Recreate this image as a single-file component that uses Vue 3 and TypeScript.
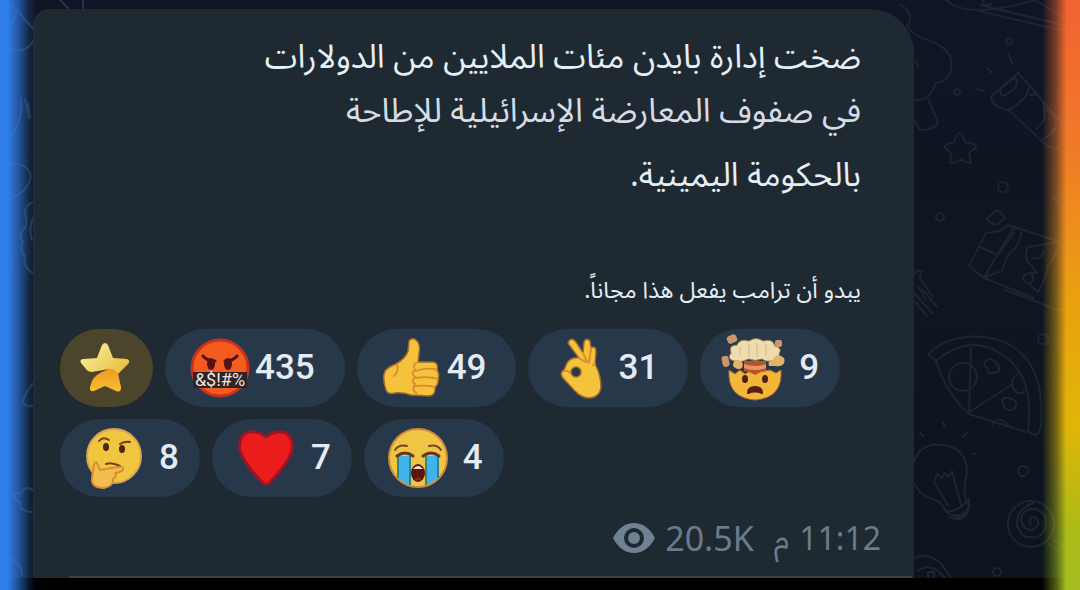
<script setup lang="ts">
type Kind = 'star' | 'curse' | 'thumb' | 'ok' | 'blown' | 'think' | 'heart' | 'cry'

interface Reaction {
  kind: Kind
  label: string
  count?: number
}

const lines: string[] = [
  'ضخت إدارة بايدن مئات الملايين من الدولارات',
  'في صفوف المعارضة الإسرائيلية للإطاحة',
  'بالحكومة اليمينية.',
]

const reactions: Reaction[] = [
  { kind: 'star', label: 'Star' },
  { kind: 'curse', label: 'Cursing face', count: 435 },
  { kind: 'thumb', label: 'Thumbs up', count: 49 },
  { kind: 'ok', label: 'OK hand', count: 31 },
  { kind: 'blown', label: 'Exploding head', count: 9 },
  { kind: 'think', label: 'Thinking face', count: 8 },
  { kind: 'heart', label: 'Heart', count: 7 },
  { kind: 'cry', label: 'Crying face', count: 4 },
]
</script>

<template>
  <main class="page">
    <div class="chat">
      <svg class="doodles doodles-left" width="120" height="578" viewBox="0 0 120 578" aria-hidden="true">
        <path d="M12 5 34 30M34 40Q25 55 10 49T-6 30M0 34Q12 30 18 8M0 145Q24 128 21 99M25 100l4 18M28 103l2 15M0 166q16-5 24 0 12 8 2 22-8 9-26 14M34 202q-12 4-8 14 1 8-1 12-8 7-2 14-4 8 2 14-4 10 9 18M34 216q-6 14-2 24M0 250q16 4 10 22-4 12-10 16M34 382q-14 18-10 22 4 4 10 1M34 492q-4-6-10-3-2 6-10 4 0 8 6 9-2 10 14 10M0 555q22 4 22 20M60 0l8 8M83 0v9" />
      </svg>
      <svg class="doodles doodles-right" width="180" height="578" viewBox="0 0 180 578" aria-hidden="true">
        <path d="M0 5q16 8 7 22M8 27q4 6 14 11 34 10 29 32-3 12-15 13-8 22-28 16M28 99l9 20q2 6-3 8-10 5-15 2l-5-10M16 60l2 7M46 0q20 20 89 0M75 10l105 25M80 5l100 24M135 0l40 24M83 0q0 8 8 4" />
        <path d="M118 73 91 97q0 8 15 13 10-2 20-14 4-10 3-11zM102 96q-6-9 14-18 4 12-14 18zM129 85l36 42q4 16-9 21-5 1-10-3L109 110M130 95q12-3 14 13M144 108l22 18M144 109q4 10-8 20M156 123q0 10-13 16M108 54l5 10M87 68l5 5M77 89l7 2" />
        <path d="M60 133q2 0 5 9l9 2q4 1 0 5l-5 4 2 10q-2 1-10-4-8 5-11 4l1-10-6-5q-1-4 9-6 4-10 6-9z" />
        <g><circle cx="109" cy="41" r="3" /><circle cx="57" cy="92" r="3" /><circle cx="103" cy="187" r="5" /><circle cx="40" cy="217" r="4" /><circle cx="143" cy="339" r="5" /><circle cx="123" cy="471" r="5" /><circle cx="97" cy="572" r="4" /></g>
        <path d="M87 219q8-10 12-8l6 7q-8 8-12 6zM86 233 69 266l15 12 50 20M86 233l14-2 8-6 10 3 42 14M80 247l18 8 16-22M84 278q14-26 30-50l8 1q-2 18-14 26l-6 16q-8 2-18 7M160 242l-32 5q-6 12 5 20l4 6-8 0q-12 4 0 11l9 8q9-15 10-27 8-8 12-23zM132 258q12 2 11-8M129 284q8-6 1-11M152 198q12 0 14-14M152 198q9 6 12 14" />
        <path d="M14 275q2-6 8-4-4 8 0 10l11 16M18 286l8 14M15 302l12 14M15 294l18 20M23 290l14 17M105 290q40 14 50 20 12 0 18-3" />
        <path d="M30 352q-3 2 0 4l6 5q34-28 65-7 34 20 27 76 1 4 6 4 4 3 7-8 6-80-56-89-34-3-55 15zM36 361q10 32 33 53l57 18M71 348l-2 65M69 412l44-28M86 361q4-4 9 1 6 5 3 10-5 0-7 2-5-2-3-5-6-4-2-8zM104 404q-4-3 0-6 4-1 7 1 7 1 5 7-3 5-7 4-6-1-5-6zM119 373q-10 7-6 14 4 9 12 5M92 425q6-12 18 2" /><circle cx="63" cy="377" r="14" />
        <path d="M14 462q8-24 38-15 20 10 13 36-2 15 4 23l-3 6q-11 7-20 0-3-10-14-13-14-5-17-15M34 482l3-8 5 4 3-5 4 4 3-6 9 34M34 482l14 23M47 511q10 2 22-12v10q-6 12-20 8M53 518q8 4 14-4M43 423l2 4M20 433l3 3M63 437l4-4M74 454h1" />
        <circle cx="131" cy="524" r="23" /><path d="M131 524q-4-4 1-7 7 0 6 8-5 8-13 3-7-8-1-16 12-8 21 4 4 15-8 21-16 3-20-12-1-16 16-22M153 539l27 20M149 544l31 22M14 558q16-6 28 7l9 13M17 571q10-7 20-1l8 8M28 578v-6h6v6" />
      </svg>

      <article class="bubble" dir="rtl" lang="ar">
        <div class="body">
          <p v-for="line in lines" :key="line" class="line">{{ line }}</p>
          <p class="note">يبدو أن ترامب يفعل هذا مجاناً.</p>
        </div>

        <div class="reactions" dir="ltr">
          <button
            v-for="r in reactions"
            :key="r.kind"
            type="button"
            class="pill"
            :class="{ gold: r.kind === 'star', compact: r.count !== undefined && r.count < 10 }"
            :aria-label="r.label"
          >
            <svg v-if="r.kind === 'star'" class="star" viewBox="0 0 50 50">
              <defs>
                <linearGradient id="starTop" x1="0" y1="0" x2="1" y2="1"><stop offset="0" stop-color="#fff3a5" /><stop offset=".5" stop-color="#efd164" /><stop offset="1" stop-color="#eea522" /></linearGradient>
                <linearGradient id="starLow" x1="0" y1="0" x2="0" y2="1"><stop offset="0" stop-color="#f19b1d" /><stop offset="1" stop-color="#f8bd36" /></linearGradient>
              </defs>
              <path d="M22 2Q25-2 28 2L33 15 47 16Q51 18 48 21L38 31 41 45 28 40 22 32 29 26 12 29Q8 29 6 26L1 20Q-1 16 4 16L17 15Z" fill="url(#starTop)" />
              <path d="M29 26Q35 25 38 31L41 45Q41 50 36 48L25 43 14 48Q9 49 10 44L12 38Q15 31 29 26Z" fill="url(#starLow)" />
            </svg>

            <svg v-else-if="r.kind === 'curse'" class="emoji" viewBox="0 0 64 64">
              <circle cx="33" cy="32" r="28" fill="#f45c1f" stroke="#c9311f" stroke-width="3" />
              <ellipse cx="24" cy="28" rx="4" ry="6" fill="#541417" /><ellipse cx="41" cy="28" rx="4" ry="6" fill="#541417" />
              <path d="M16 20q4 5 12 5M50 20q-4 5-12 5" fill="none" stroke="#541417" stroke-width="3" stroke-linecap="round" />
              <path d="M6 36h54v16H6z" fill="#302322" />
              <text x="33" y="50" text-anchor="middle" class="curse-text">&amp;$!#%</text>
            </svg>

            <svg v-else-if="r.kind === 'thumb'" class="emoji" viewBox="0 0 64 64">
              <path d="M30 5Q33 1 37 4 42 8 40 18L39 26 54 26Q60 27 58 34 61 38 59 43 60 48 56 51 57 60 49 60L32 59Q23 56 16 57 9 59 7 54 3 42 6 35 9 31 17 28 27 22 29 15Z" fill="#f5c23b" stroke="#9f682d" stroke-width="1.5" />
              <path d="M18 28Q20 36 15 40M39 26Q33 28 36 34 31 37 36 41 31 45 36 48 32 54 38 58M37 35Q49 31 58 34M37 42Q49 40 59 43M36 50Q48 49 56 51" fill="none" stroke="#d98a2d" stroke-width="1.8" stroke-linecap="round" />
            </svg>

            <svg v-else-if="r.kind === 'ok'" class="emoji" viewBox="0 0 64 64">
              <path fill-rule="evenodd" d="M19 5Q22 1 26 6L33 17 34 6Q36 1 40 5L41 12Q46 9 46 16L45 28Q51 39 51 51 50 61 40 62 31 62 24 54L13 42Q9 37 14 34L17 27Q21 21 29 22L20 10Q17 7 19 5ZM26 31A5 5 0 1 0 26 41 5 5 0 1 0 26 31Z" fill="#f5c23b" stroke="#9f682d" stroke-width="1.5" />
              <path d="M29 22L35 26M33 17L37 26M41 12L39 27M14 35Q18 34 20 37M45 28L43 29" fill="none" stroke="#db8e2f" stroke-width="2" stroke-linecap="round" />
            </svg>

            <svg v-else-if="r.kind === 'blown'" class="emoji" viewBox="0 0 64 64">
              <path d="M7 34L13 38 18 34 23 38 28 35H42L48 34 54 37 59 34Q61 62 33 64 5 62 7 34Z" fill="#f2b63b" stroke="#a5652d" />
              <path d="M22 25H44V35L39 36 33 39 27 36 22 35Z" fill="#b9522f" /><path d="M22 28q11 4 22 0v4q-11 4-22 0z" fill="#e8965f" />
              <path d="M12 25Q4 23 9 17 6 9 15 9 18 2 27 5 34 0 41 5 51 2 53 10 61 12 57 18 61 25 52 24 45 27 40 23 33 26 27 23 20 27 12 25Z" fill="#eedcae" stroke="#8e7047" />
              <path d="M18 11v8M27 8v13M35 7v14M44 8v12" stroke="#d0b884" />
              <path d="M47 30Q45 24 51 24 53 18 59 20 64 22 62 27 60 31 53 30Z" fill="#e2b26b" />
              <g fill="#d0956a"><rect x="5" y="-1" width="10" height="8" rx="3" transform="rotate(-24 10 3)" /><rect x="53" y="4" width="7" height="7" rx="2" /><rect x="0" y="20" width="7" height="11" rx="3" transform="rotate(-12 3 25)" /></g>
              <path d="M11 30q0-7 5-6 7 2 4 8-5 3-9-2z" fill="#e2b26b" />
              <ellipse cx="23" cy="43" rx="3" ry="4" fill="#4b2112" /><ellipse cx="43" cy="43" rx="3" ry="4" fill="#4b2112" />
              <path d="M26 57Q26 51 33 51 40 51 40 57 33 54 26 57Z" fill="#5a1e12" stroke="#5a1e12" stroke-width="2" stroke-linejoin="round" />
            </svg>

            <svg v-else-if="r.kind === 'think'" class="emoji" viewBox="0 0 64 64">
              <circle cx="32" cy="30" r="27" fill="#f0c640" stroke="#d6a354" stroke-width="2" />
              <ellipse cx="24" cy="21" rx="3" ry="4" fill="#4b2515" /><ellipse cx="40" cy="23" rx="3" ry="4" fill="#4b2515" />
              <path d="M17 15Q21 10 27 14M38 18Q43 15 48 16M24 38Q30 36 38 40" fill="none" stroke="#70401c" stroke-width="2" stroke-linecap="round" />
              <path d="M12 38Q14 34 16 39L18 44Q28 42 37 41 42 40 41 44 39 46 33 47 36 49 31 53 32 60 22 62 9 62 10 52Z" fill="#f2bd4c" stroke="#d98e3a" stroke-width="2" stroke-linejoin="round" />
            </svg>

            <svg v-else-if="r.kind === 'heart'" class="emoji" viewBox="0 0 64 64">
              <path d="M32 11Q42 3 52 7 60 12 58 25 53 39 36 56 32 61 28 56 11 39 6 25 4 12 12 7 22 3 32 11Z" fill="#eb1c1c" stroke="#9c1426" stroke-width="3" stroke-linejoin="round" />
            </svg>

            <svg v-else class="emoji" viewBox="0 0 64 64">
              <circle cx="32" cy="32" r="29" fill="#f0c444" stroke="#cf8b3d" stroke-width="2" />
              <path d="M12 30h12v29Q18 57 12 52zM40 30h12v22q-6 5-12 7z" fill="#42b3e8" /><path d="M12 30v22M24 30v29M40 30v29M52 30v22" stroke="#32858a" stroke-width="2" />
              <path d="M9 24Q13 18 21 20M55 24Q51 18 43 20" fill="none" stroke="#74451f" stroke-width="2" stroke-linecap="round" />
              <path d="M11 30Q19 24 27 30M37 30Q45 24 53 30" fill="none" stroke="#63391b" stroke-width="3" stroke-linecap="round" />
              <ellipse cx="32" cy="47" rx="7" ry="9" fill="#5b160f" /><path d="M27 43q5-6 10 0z" fill="#f4e6d8" /><path d="M28 53q4-3 8 0-4 3-8 0z" fill="#8a2a22" />
            </svg>
            <span v-if="r.count !== undefined" class="count">{{ r.count }}</span>
          </button>
        </div>

        <footer class="meta" dir="ltr">
          <svg class="eye" viewBox="0 0 42 30" aria-label="Views" role="img">
            <path fill-rule="evenodd" d="M0 15Q8 0 21 0T42 15Q34 30 21 30T0 15ZM21 5A10 10 0 1 0 21 25 10 10 0 1 0 21 5Z" fill="#6f8193" />
            <circle cx="21" cy="15" r="6" fill="#6f8193" />
          </svg>
          <span class="views">20.5K</span>
          <span class="period">م</span>
          <time>11:12</time>
        </footer>
      </article>
    </div>
    <div class="glow glow-left" />
    <div class="glow glow-right" />
  </main>
</template>

<style>
body {
  margin: 0;
  background: #000;
}
</style>

<style scoped>
.page {
  position: relative;
  display: flex;
  flex-direction: column;
  box-sizing: border-box;
  min-height: 100vh;
  padding-bottom: 12px;
  overflow: hidden;
  background: #000;
  font-family: "Noto Sans", "Noto Sans Arabic", "DejaVu Sans", sans-serif;
}

.chat {
  position: relative;
  display: flex;
  flex: 1;
  padding: 9px 166px 0 33px;
  background: linear-gradient(#0f1524, #0e1620 50%, #0c151d);
}

.doodles {
  position: absolute;
  top: 0;
  fill: none;
  stroke: #1c2533;
  stroke-width: 2;
  stroke-linecap: round;
  stroke-linejoin: round;
}

.doodles-left {
  left: 0;
  stroke: #243347;
}

.doodles-right {
  right: 0;
}

.bubble {
  position: relative;
  flex: 1;
  display: flex;
  flex-direction: column;
  box-sizing: border-box;
  min-width: 0;
  padding: 20px 33px 16px 27px;
  border-radius: 16px 44px 0 0;
  background: #1f2932;
}

.bubble::after {
  content: "";
  position: absolute;
  right: 2px;
  bottom: 0;
  left: 36px;
  height: 2px;
  background: #3b4249;
}

.body {
  padding-right: 20px;
  color: #e6eff6;
}

.line {
  margin: 0;
  font-size: 33px;
  line-height: 54px;
}

.line:nth-child(2) {
  color: #d5dce6;
}

.line:nth-child(3) {
  margin-top: 10px;
}

.note {
  margin: 68px 0 0;
  font-size: 23px;
  line-height: 40px;
}

.reactions {
  display: flex;
  flex-wrap: wrap;
  gap: 12px;
  margin-top: 20px;
}

.pill {
  display: flex;
  align-items: center;
  gap: 4px;
  height: 78px;
  padding: 0 30px 0 22px;
  border: 0;
  border-radius: 39px;
  background: #27384b;
  color: #e5ebf3;
  font: 500 35px/40px Roboto, sans-serif;
}

.gold {
  padding: 0 23px 0 20px;
  background: #4b452b;
}

.compact {
  gap: 13px;
  padding-right: 21px;
}

.emoji {
  width: 64px;
  height: 64px;
  overflow: visible;
}

.star {
  width: 50px;
  height: 50px;
  overflow: visible;
}

.curse-text {
  fill: #eee5e3;
  font: 400 18px Roboto, sans-serif;
}

.meta {
  display: flex;
  align-items: center;
  justify-content: flex-end;
  gap: 10px;
  margin-top: auto;
  color: #6c7a89;
  font-size: 32px;
  line-height: 48px;
}

.eye {
  width: 42px;
  height: 30px;
}

.views {
  font-size: 34px;
}

.period {
  margin-left: 10px;
}

.glow {
  position: absolute;
  top: 0;
  bottom: 0;
  pointer-events: none;
}

.glow-left {
  left: 0;
  width: 36px;
  background: linear-gradient(90deg, #2f80ed 0, #2f80ed 20%, rgba(47, 128, 237, 0.6) 52%, rgba(47, 128, 237, 0.15) 82%, transparent);
}

.glow-right {
  right: 0;
  width: 38px;
  background: linear-gradient(#f16232, #f07a29 25%, #eaa010 50%, #e0b508 72%, #abbb18 90%, #a5bd20);
  mask-image: linear-gradient(270deg, #000 0, #000 36%, rgba(0, 0, 0, 0.5) 62%, transparent);
}
</style>
